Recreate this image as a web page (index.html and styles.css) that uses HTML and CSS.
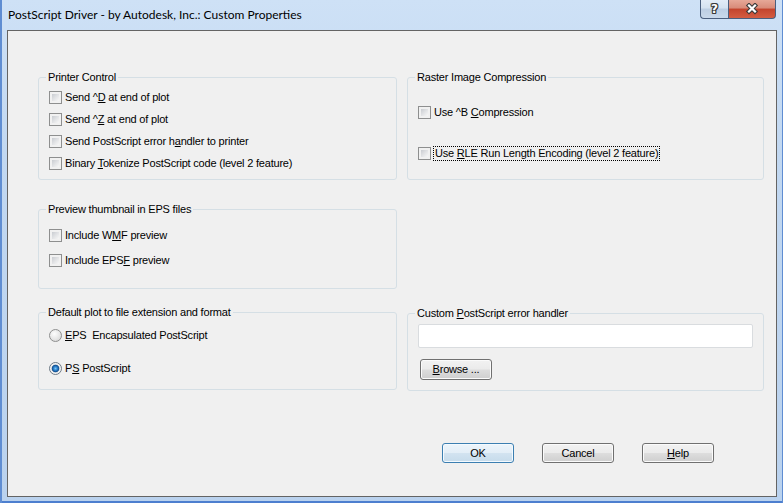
FILE: index.html
```html
<!DOCTYPE html>
<html>
<head>
<meta charset="utf-8">
<title>Custom Properties</title>
<link rel="stylesheet" href="styles.css">
</head>
<body>
<div class="window">
  <div class="titlebar">
    <div class="title">PostScript Driver - by Autodesk, Inc.: Custom Properties</div>
    <div class="caption">
      <div class="cap-btn cap-help">?</div>
      <div class="cap-btn cap-close">
        <svg width="14" height="12" viewBox="0 0 14 12"><path d="M4 2.5 L10 8.5 M10 2.5 L4 8.5" stroke="#3a3a3a" stroke-width="4.4" stroke-linecap="square" fill="none"/><path d="M4 2.5 L10 8.5 M10 2.5 L4 8.5" stroke="#ffffff" stroke-width="2.2" stroke-linecap="square" fill="none"/></svg>
      </div>
    </div>
  </div>
  <div class="client">
    <div class="row row-1">
      <div class="group g-printer">
        <div class="legend">Printer Control</div>
        <div class="opts">
          <div class="opt"><span class="chk"></span><span>Send ^<u>D</u> at end of plot</span></div>
          <div class="opt"><span class="chk"></span><span>Send ^<u>Z</u> at end of plot</span></div>
          <div class="opt"><span class="chk"></span><span>Send PostScript error h<u>a</u>ndler to printer</span></div>
          <div class="opt"><span class="chk"></span><span>Binary <u>T</u>okenize PostScript code (level 2 feature)</span></div>
        </div>
      </div>
      <div class="group g-raster">
        <div class="legend">Raster Image Compression</div>
        <div class="opts">
          <div class="opt"><span class="chk"></span><span>Use ^B <u>C</u>ompression</span></div>
          <div class="opt"><span class="chk"></span><span class="focus">Use <u>R</u>LE Run Length Encoding (level 2 feature)</span></div>
        </div>
      </div>
    </div>
    <div class="row row-2">
      <div class="group g-preview">
        <div class="legend">Preview thumbnail in EPS files</div>
        <div class="opts">
          <div class="opt"><span class="chk"></span><span>Include W<u>M</u>F preview</span></div>
          <div class="opt"><span class="chk"></span><span>Include EPS<u>F</u> preview</span></div>
        </div>
      </div>
    </div>
    <div class="row row-3">
      <div class="group g-default">
        <div class="legend">Default plot to file extension and format</div>
        <div class="opts">
          <div class="opt"><span class="radio"></span><span><u>E</u>PS  Encapsulated PostScript</span></div>
          <div class="opt"><span class="radio on"></span><span>P<u>S</u> PostScript</span></div>
        </div>
      </div>
      <div class="group g-custom">
        <div class="legend">Custom <u>P</u>ostScript error handler</div>
        <div class="field"></div>
        <div class="btn btn-browse"><span><u>B</u>rowse ...</span></div>
      </div>
    </div>
    <div class="actions">
      <div class="btn btn-default">OK</div>
      <div class="btn">Cancel</div>
      <div class="btn"><span><u>H</u>elp</span></div>
    </div>
  </div>
</div>
</body>
</html>
```
FILE: styles.css
```css
html, body {
  margin: 0;
  padding: 0;
}

body {
  width: 783px;
  height: 503px;
  overflow: hidden;
  background: #bcd4ef;
  font-family: "Liberation Sans", Arial, sans-serif;
  font-size: 11px;
  color: #000;
}

.window {
  box-sizing: border-box;
  width: 783px;
  height: 503px;
  display: flex;
  flex-direction: column;
  padding: 0 6px 6px 7px;
  background: linear-gradient(180deg, #cee1f6 0%, #c2d8f1 30%, #bad2ee 100%);
  box-shadow: inset 2px 0 0 #5f8dd2, inset -1px 0 0 #5f8dd2, inset 0 -2px 0 #4d7fcf;
}

.titlebar {
  height: 30px;
  flex: none;
  display: flex;
  justify-content: space-between;
  align-items: flex-start;
}

.title {
  margin: 7px 0 0 1px;
  font-family: Lato, "Liberation Sans", sans-serif;
  font-size: 12px;
  line-height: 15px;
  color: #000;
}

.caption {
  display: flex;
  margin-right: 1px;
}

.cap-btn {
  box-sizing: border-box;
  height: 19px;
  border: 1px solid #4a5f7e;
  border-top: none;
  display: flex;
  align-items: center;
  justify-content: center;
}

.cap-help {
  width: 28px;
  border-right: none;
  border-radius: 0 0 0 4px;
  background: linear-gradient(180deg, #e2ecf7 0%, #d5e2f0 45%, #bccee3 50%, #c9d9eb 100%);
  font-family: "DejaVu Sans", sans-serif;
  font-weight: bold;
  font-size: 12px;
  color: #fff;
  text-shadow: 1px 0 0 #3a3a3a, -1px 0 0 #3a3a3a, 0 1px 0 #3a3a3a, 0 -1px 0 #3a3a3a,
    1px 1px 0 #3a3a3a, -1px -1px 0 #3a3a3a, 1px -1px 0 #3a3a3a, -1px 1px 0 #3a3a3a;
}

.cap-close {
  width: 48px;
  border-radius: 0 0 4px 0;
  background: linear-gradient(180deg, #e6a898 0%, #d88b79 45%, #c3442d 50%, #d45d42 100%);
}

.client {
  flex: 1;
  box-sizing: border-box;
  border: 1px solid #646464;
  background: #f0f0f0;
  padding: 46px 0 0 30px;
  display: flex;
  flex-direction: column;
  letter-spacing: -0.2px;
}

.row {
  display: grid;
  grid-template-columns: 359px 357px;
  column-gap: 10px;
  align-items: start;
}

.row-1 { height: 103px; }
.row-2 { height: 80px; margin-top: 29px; }
.row-3 { height: 79px; margin-top: 23px; }

.group {
  box-sizing: border-box;
  border: 1px solid #d5dfe5;
  border-radius: 3px;
  padding: 0 10px;
  display: flex;
  flex-direction: column;
  align-items: flex-start;
}

.row-1 .group { height: 103px; }
.row-2 .group { height: 80px; }
.row-3 .group { height: 78px; }
.g-custom { margin-top: 1px; }

.legend {
  margin: -7px 0 0 -3px;
  padding: 0 2px;
  height: 13px;
  line-height: 13px;
  background: #f0f0f0;
  white-space: nowrap;
}

.opts {
  display: flex;
  flex-direction: column;
}

.g-printer .opts { margin-top: 7px; gap: 9px; }
.g-raster .opts { margin-top: 22px; gap: 28px; }
.g-preview .opts { margin-top: 13px; gap: 12px; }
.g-default .opts { margin-top: 10px; gap: 20px; }

.opt {
  display: flex;
  align-items: center;
  gap: 3px;
  height: 13px;
  line-height: 13px;
  white-space: pre;
}

u {
  text-underline-offset: 1px;
}

.chk {
  flex: none;
  box-sizing: border-box;
  width: 13px;
  height: 13px;
  border: 1px solid #8e8f8f;
  padding: 2px;
  background: linear-gradient(135deg, #c9ccd1 0%, #e4e5e7 55%, #f7f7f7 100%) content-box, #f3f3f3;
  box-shadow: inset 0 0 0 2px #f1f1f1;
}

.radio {
  flex: none;
  box-sizing: border-box;
  width: 13px;
  height: 13px;
  border-radius: 50%;
  border: 1px solid #8e8f8f;
  background: radial-gradient(circle at 40% 35%, #fdfdfd 0%, #e6e6e6 55%, #cfcfcf 100%);
}

.radio.on {
  border-color: #6e7a86;
  background: radial-gradient(circle at 50% 50%, #7cc6f5 0px, #2d84cf 1.8px, #134f8f 3.4px, #e9e9e9 4.2px, #f6f6f6 5.5px);
}

.focus {
  padding: 0 1px;
  outline: 1px dotted #000;
  outline-offset: 0;
}

.field {
  align-self: stretch;
  box-sizing: border-box;
  height: 24px;
  margin-top: 4px;
  background: #fff;
  border: 1px solid #d9dcdf;
  border-radius: 2px;
}

.btn {
  box-sizing: border-box;
  width: 72px;
  height: 20px;
  border: 1px solid #707070;
  border-radius: 3px;
  background: linear-gradient(180deg, #f2f2f2 0%, #ebebeb 48%, #dddddd 52%, #cfcfcf 100%);
  box-shadow: inset 0 0 0 1px #fbfbfb;
  display: flex;
  align-items: center;
  justify-content: center;
  line-height: 13px;
  white-space: nowrap;
}

.btn-browse {
  height: 21px;
  margin: 11px 0 0 2px;
}

.btn-default {
  border-color: #3c7fb1;
  background: linear-gradient(180deg, #edf5fb 0%, #e3eef7 48%, #d2e3f0 52%, #c6dbeb 100%);
  box-shadow: inset 0 0 0 1px #f4faff;
}

.actions {
  display: flex;
  justify-content: flex-end;
  gap: 28px;
  margin: 52px 62px 0 0;
}
```
